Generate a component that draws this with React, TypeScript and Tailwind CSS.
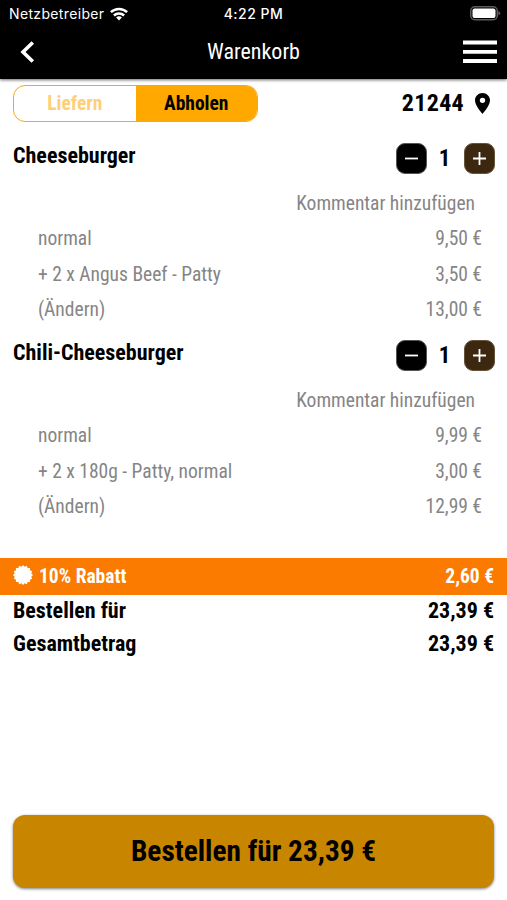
import React from "react";

const cond = "font-['Roboto_Condensed','Roboto',sans-serif] [font-stretch:75%] whitespace-nowrap";

const sealPoints = Array.from({ length: 32 }, (_, i) => {
  const r = i % 2 === 0 ? 10 : 8.4;
  const a = (i * Math.PI) / 16;
  return `${(10 + r * Math.sin(a)).toFixed(2)},${(10 - r * Math.cos(a)).toFixed(2)}`;
}).join(" ");

function Wifi() {
  return (
    <svg width="18" height="14" viewBox="0 0 18 14" fill="none" stroke="#fff" strokeWidth="2.5">
      <path d="M0.9 5.2A11.6 11.6 0 0 1 17.1 5.2" />
      <path d="M3.9 8.5A7.3 7.3 0 0 1 14.1 8.5" />
      <path d="M9 13.4L6.1 10.6A4 4 0 0 1 11.9 10.6Z" fill="#fff" stroke="none" />
    </svg>
  );
}

function Battery() {
  return (
    <svg width="31" height="15" viewBox="0 0 31 15">
      <rect x="0.75" y="0.75" width="26.5" height="13" rx="4" fill="none" stroke="#5c5c5c" strokeWidth="1.5" />
      <rect x="2.5" y="2.5" width="23" height="9.5" rx="2" fill="#fff" />
      <path d="M28.3 5V9.6Q30.2 8.8 30.2 7.3T28.3 5Z" fill="#5c5c5c" />
    </svg>
  );
}

function Stepper() {
  return (
    <div className="flex h-[31px] items-center">
      <button className="flex size-[31px] items-center justify-center rounded-[9px] border border-[#555] bg-black">
        <svg width="15" height="15" viewBox="0 0 15 15" stroke="#fff" strokeWidth="1.8"><path d="M1 7.5H14" /></svg>
      </button>
      <span className="w-[37px] pr-px text-center text-[23px] font-bold leading-[31px]">1</span>
      <button className="flex size-[31px] items-center justify-center rounded-[9px] border border-[#6a5338] bg-[#3c2710]">
        <svg width="15" height="15" viewBox="0 0 15 15" stroke="#fff" strokeWidth="1.8"><path d="M1 7.5H14M7.5 1V14" /></svg>
      </button>
    </div>
  );
}

function Item({ name, rows }: { name: string; rows: string[][] }) {
  return (
    <section className="h-[197px] shrink-0">
      <div className="flex h-[43px] justify-between pl-[13px] pr-[12.5px]">
        <h2 className="text-[22px] font-bold leading-[26px]">{name}</h2>
        <Stepper />
      </div>
      <div className="text-[19.5px] text-[#858585]">
        <div className="h-[35px] pr-8 text-right leading-[35px]">Kommentar hinzufügen</div>
        {rows.map(([a, b]) => (
          <div key={a} className="flex h-[35.5px] justify-between pl-[38px] pr-[25px] leading-[35.5px]">
            <span>{a}</span>
            <span>{b}</span>
          </div>
        ))}
      </div>
    </section>
  );
}

function Total({ label }: { label: string }) {
  return (
    <div className="flex h-[33px] justify-between pl-[13px] pr-[13px] text-[22px] font-bold leading-[31px]">
      <span>{label}</span>
      <span>23,39 €</span>
    </div>
  );
}

export default function App() {
  return (
    <div className={`flex h-[900px] w-[507px] flex-col overflow-hidden bg-white text-black ${cond}`}>
      <header className="h-[79px] shrink-0 bg-black text-white shadow-[0_1px_3px_rgba(0,0,0,0.6)]">
        <div className="flex h-[27px] items-center justify-between pl-[9px] pr-[6px] font-['Inter',sans-serif] text-[14px] [font-stretch:100%]">
          <div className="flex w-[160px] items-center gap-[6px]">
            <span className="tracking-[0.35px]">Netzbetreiber</span>
            <Wifi />
          </div>
          <span className="font-medium tracking-[0.5px]">4:22 PM</span>
          <div className="flex w-[163px] justify-end"><Battery /></div>
        </div>
        <div className="grid h-[50px] grid-cols-[1fr_auto_1fr] items-center pl-[20px] pr-[10px]">
          <svg width="34" height="22" viewBox="0 0 34 22" fill="none" stroke="#fff" strokeWidth="3.6"><path d="M12.8 1.5L3 11L12.8 20.5" /></svg>
          <span className="-ml-[10px] h-[35px] text-[22px] leading-[33px]">Warenkorb</span>
          <svg className="justify-self-end" width="34" height="24" viewBox="0 0 34 24" fill="#fff"><path d="M0 0.5h34v4H0zM0 10h34v3.8H0zM0 19h34v4H0z" /></svg>
        </div>
      </header>
      <div className="flex h-[64px] shrink-0 justify-between pl-[13px] pr-[17px] pt-[6px]">
        <div className="flex h-[37px] w-[245px] overflow-hidden rounded-xl border-[1.5px] border-[#ffa800] text-center text-[19.5px] font-bold leading-[35px]">
          <span className="flex-1 text-[#ffcf78]">Liefern</span>
          <span className="flex-1 bg-[#ffa800]">Abholen</span>
        </div>
        <div className="flex h-[36px] items-center gap-[11px]">
          <span className="text-[24px] font-bold tracking-[0.3px]">21244</span>
          <svg width="15" height="21" viewBox="5 2 14 20" preserveAspectRatio="none"><path d="M12 2C8.13 2 5 5.13 5 9c0 5.25 7 13 7 13s7-7.75 7-13c0-3.87-3.13-7-7-7zm0 9.5a2.5 2.5 0 0 1 0-5 2.5 2.5 0 0 1 0 5z" /></svg>
        </div>
      </div>
      <Item name="Cheeseburger" rows={[["normal", "9,50 €"], ["+ 2 x Angus Beef - Patty", "3,50 €"], ["(Ändern)", "13,00 €"]]} />
      <Item name="Chili-Cheeseburger" rows={[["normal", "9,99 €"], ["+ 2 x 180g - Patty, normal", "3,00 €"], ["(Ändern)", "12,99 €"]]} />
      <div className="mt-[21px] flex h-[37px] shrink-0 justify-between bg-[#fb7a00] pl-[13px] pr-[13px] text-[19.5px] font-bold leading-[37px] text-white">
        <div className="flex gap-[6px]">
          <svg className="mt-[7px]" width="20" height="20" viewBox="0 0 20 20" fill="#fff"><polygon points={sealPoints} /></svg>
          <span>10% Rabatt</span>
        </div>
        <span>2,60 €</span>
      </div>
      <Total label="Bestellen für" />
      <Total label="Gesamtbetrag" />
      <button className="mx-[13px] mb-[12px] mt-auto h-[73px] shrink-0 rounded-xl bg-[#c88500] text-[29.3px] font-bold shadow-[0_1px_3px_rgba(0,0,0,0.5)]">Bestellen für 23,39 €</button>
    </div>
  );
}
